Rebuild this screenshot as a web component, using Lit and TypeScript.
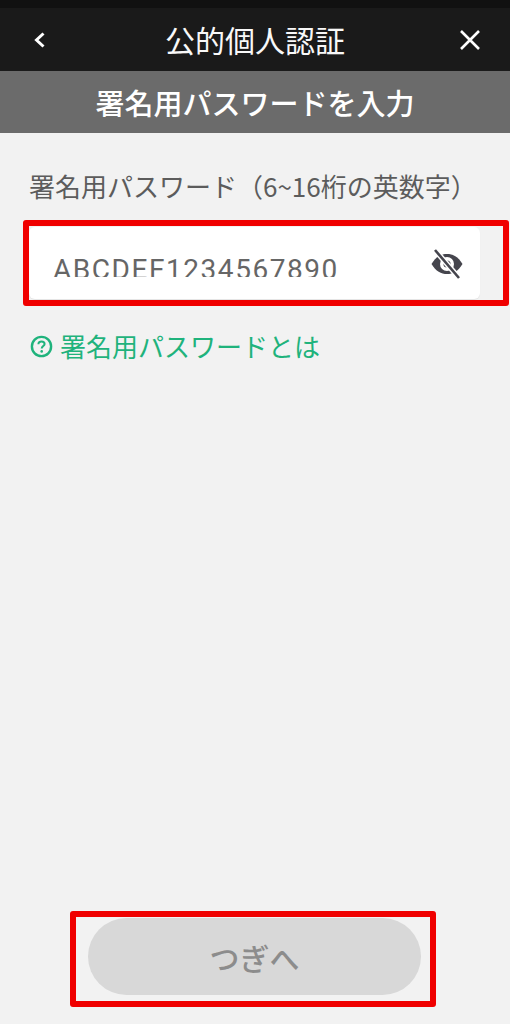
import { LitElement, html, css } from "lit";
import { customElement } from "lit/decorators.js";

@customElement("app-root")
export class AppRoot extends LitElement {
  static styles = css`
    :host {
      display: block;
      width: 510px;
      height: 1024px;
      position: relative;
      overflow: hidden;
      background: #f2f2f2;
      font-family: "Noto Sans CJK JP", "Noto Sans", sans-serif;
    }
    .page { display: flex; flex-direction: column; height: 1024px; }
    .status { height: 8px; background: #111111; flex: none; }
    .top {
      height: 63px; flex: none; background: #1a1a1a; color: #fff;
      display: grid; grid-template-columns: 80px 1fr 80px; align-items: center;
    }
    .top .title { text-align: center; font-size: 30px; line-height: 63px; font-weight: 400; color: #f8f8f8; }
    .back { padding-left: 30px; display: flex; }
    .close { padding-left: 28px; display: flex; }
    .sub {
      height: 62px; flex: none; background: #6b6b6b; color: #fff;
      text-align: center; font-size: 29px; line-height: 62px; font-weight: 500;
    }
    .content { flex: 1; display: flex; flex-direction: column; padding: 35px 0 0 29px; }
    .label { font-size: 26px; line-height: 36px; color: #5c5c5c; margin: 0 0 23px 0; white-space: nowrap; font-weight: 400; }
    .field {
      width: 451px; height: 72px; background: #fff; border-radius: 6px; box-sizing: border-box;
      display: flex; align-items: flex-start; padding: 0 16px 0 24px; justify-content: space-between;
      box-shadow: 0 1px 1px rgba(0,0,0,0.06);
    }
    .value {
      height: 50px; overflow: hidden; font-family: Roboto, sans-serif; font-size: 28px;
      line-height: 28px; color: #666; letter-spacing: 1.55px; box-sizing: border-box;
      display: flex; align-items: flex-start;
    }
    .value span { display: block; margin-top: 29px; }
    .eye { margin-top: 20px; display: flex; }
    .help { display: flex; align-items: center; gap: 7px; margin: 29px 0 0 1px; color: #1fb37c; font-size: 26px; line-height: 36px; }
    .help svg { flex: none; }
    .foot { margin-top: auto; display: flex; padding: 0 0 29px 59px; }
    .next {
      width: 333px; height: 77px; border-radius: 39px; background: #d8d8d8; color: #8c8c8c;
      display: flex; align-items: center; justify-content: center; font-size: 30px; font-weight: 500;
    }
    .mark { position: absolute; border: 6px solid #f00000; border-radius: 3px; box-sizing: border-box; pointer-events: none; }
    .m1 { left: 23px; top: 220px; width: 486px; height: 86px; }
    .m2 { left: 70px; top: 911px; width: 366px; height: 96px; }
  `;

  render() {
    return html`
      <div class="page">
        <div class="status"></div>
        <div class="top">
          <div class="back">
            <svg width="20" height="22" viewBox="0 0 20 22"><path d="M13.5 4.5 L6.5 11 L13.5 17.5" fill="none" stroke="#fff" stroke-width="3"/></svg>
          </div>
          <div class="title">公的個人認証</div>
          <div class="close">
            <svg width="24" height="24" viewBox="0 0 24 24"><path d="M3 3 L21 21 M21 3 L3 21" fill="none" stroke="#fff" stroke-width="2.6"/></svg>
          </div>
        </div>
        <div class="sub">署名用パスワードを入力</div>
        <div class="content">
          <div class="label">署名用パスワード（6~16桁の英数字）</div>
          <div class="field">
            <div class="value"><span>ABCDEF1234567890</span></div>
            <div class="eye">
              <svg width="34" height="34" viewBox="0 0 34 34">
                <path d="M1.5 17 C6 9.5 11 7 17 7 C23 7 28 9.5 32.5 17 C28 24.5 23 27 17 27 C11 27 6 24.5 1.5 17 Z" fill="#45454d"/>
                <circle cx="17" cy="17" r="7" fill="#fff"/>
                <circle cx="17" cy="17" r="3.6" fill="#45454d"/>
                <path d="M5 3 L29 31" stroke="#fff" stroke-width="5.5"/>
                <path d="M5 3 L29 31" stroke="#45454d" stroke-width="2.6"/>
              </svg>
            </div>
          </div>
          <div class="help">
            <svg width="23" height="23" viewBox="0 0 23 23">
              <circle cx="11.5" cy="11.5" r="9.6" fill="none" stroke="#1fb37c" stroke-width="2.4"/>
              <path d="M8.4 9.2 C8.4 7.4 9.8 6.4 11.5 6.4 C13.3 6.4 14.6 7.5 14.6 9 C14.6 11 11.7 11.2 11.7 13.6" fill="none" stroke="#1fb37c" stroke-width="2"/>
              <circle cx="11.7" cy="16.4" r="1.3" fill="#1fb37c"/>
            </svg>
            <span>署名用パスワードとは</span>
          </div>
          <div class="foot"><div class="next">つぎへ</div></div>
        </div>
      </div>
      <div class="mark m1"></div>
      <div class="mark m2"></div>
    `;
  }
}
